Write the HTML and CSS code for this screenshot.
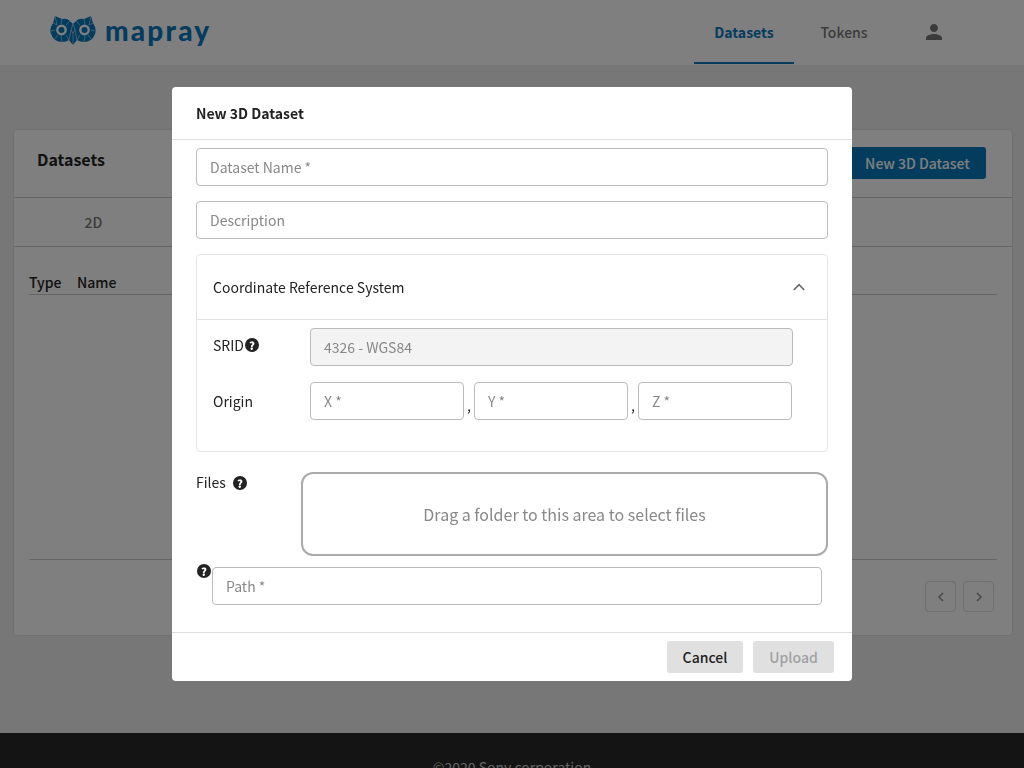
FILE: index.html
```html
<!DOCTYPE html>
<html lang="en">
<head>
    <meta charset="UTF-8">
    <meta name="viewport" content="width=device-width, initial-scale=1.0">
    <title>Mapray Datasets</title>
    <link rel="stylesheet" href="styles.css">
</head>
<body>
    <header class="topbar">
        <a class="logo">
            <svg class="logo-owl" viewBox="0 0 46 29" width="46" height="29">
                <path class="owl-fill" d="M5 0 L12 3 Q17 2 20 5 L23 8 L26 5 Q29 2 34 3 L41 0 L43 7 Q47 13 45 18 Q42 26 34 26 Q30 26 27 24 L23 29 L19 24 Q16 26 12 26 Q4 26 1 18 Q-1 13 3 7 Z"/>
                <path class="owl-lines" d="M5 0 L7 9 M12 3 L11 8 M20 5 L16 9 M1 15 L5 14 M3 7 L7 9 M21 14 L23 8 M23 8 L25 14 M5 23 L8 19 M19 24 L16 19 M11 20 L12 26 M41 0 L39 9 M34 3 L35 8 M26 5 L30 9 M45 15 L41 14 M43 7 L39 9 M41 23 L38 19 M27 24 L30 19 M35 20 L34 26 M21 14 L19 24 M25 14 L27 24 M23 29 L23 17 M21 14 L23 17 L25 14"/>
                <circle class="owl-ring" cx="11.5" cy="14" r="5.4"/>
                <circle class="owl-fill" cx="11.5" cy="14" r="3"/>
                <circle class="owl-ring" cx="34.5" cy="14" r="5.4"/>
                <circle class="owl-fill" cx="34.5" cy="14" r="3"/>
            </svg>
            <span class="logo-text">mapray</span>
        </a>
        <nav class="nav">
            <a class="nav-item active">Datasets</a>
            <a class="nav-item">Tokens</a>
            <a class="nav-user">
                <svg viewBox="0 0 24 24" width="24" height="24"><path d="M12 12c2.2 0 4-1.8 4-4s-1.8-4-4-4-4 1.8-4 4 1.8 4 4 4zm0 2c-2.7 0-8 1.3-8 4v2h16v-2c0-2.7-5.3-4-8-4z"/></svg>
            </a>
        </nav>
    </header>

    <main class="content">
        <section class="card">
            <div class="card-head">
                <h2>Datasets</h2>
                <button class="btn-primary" type="button">New 3D Dataset</button>
            </div>
            <div class="tabs">
                <div class="tab">2D</div>
                <div class="tab">3D</div>
            </div>
            <div class="table-wrap">
                <div class="table-head">
                    <span class="col-type">Type</span>
                    <span>Name</span>
                </div>
                <div class="table-rows"></div>
                <div class="pager">
                    <button class="pager-btn" type="button">
                        <svg viewBox="0 0 24 24" width="16" height="16"><path d="M15 6 L9 12 L15 18"/></svg>
                    </button>
                    <button class="pager-btn" type="button">
                        <svg viewBox="0 0 24 24" width="16" height="16"><path d="M9 6 L15 12 L9 18"/></svg>
                    </button>
                </div>
            </div>
        </section>
    </main>

    <footer class="footer">©2020 Sony corporation</footer>

    <div class="overlay">
        <div class="modal">
            <div class="modal-head">New 3D Dataset</div>
            <div class="modal-body">
                <input class="field" type="text" placeholder="Dataset Name *">
                <input class="field" type="text" placeholder="Description">

                <div class="panel">
                    <div class="panel-head">
                        <span>Coordinate Reference System</span>
                        <svg class="chevron" viewBox="0 0 24 24" width="18" height="18"><path d="M5 16 L12 9 L19 16"/></svg>
                    </div>
                    <div class="panel-body">
                        <div class="row row-srid">
                            <label class="row-label srid-label">SRID<span class="help help-tight">?</span></label>
                            <input class="field field-disabled" type="text" value="4326 - WGS84" disabled>
                        </div>
                        <div class="row">
                            <label class="row-label">Origin</label>
                            <div class="origin">
                                <input class="field" type="text" placeholder="X *">
                                <span class="comma">,</span>
                                <input class="field" type="text" placeholder="Y *">
                                <span class="comma">,</span>
                                <input class="field" type="text" placeholder="Z *">
                            </div>
                        </div>
                    </div>
                </div>

                <div class="files">
                    <label class="files-label">Files<span class="help">?</span></label>
                    <div class="dropzone">Drag a folder to this area to select files</div>
                </div>

                <div class="path">
                    <span class="help">?</span>
                    <input class="field" type="text" placeholder="Path *">
                </div>
            </div>
            <div class="modal-foot">
                <button class="btn" type="button">Cancel</button>
                <button class="btn btn-disabled" type="button">Upload</button>
            </div>
        </div>
    </div>
</body>
</html>
```

FILE: styles.css
```css
* {
    box-sizing: border-box;
}

html, body {
    height: 768px;
    margin: 0;
    overflow: hidden;
}

body {
    font-family: "Noto Sans CJK JP", "Noto Sans", sans-serif;
    font-size: 14px;
    color: #222;
    background-color: #eeeeee;
}

/* Top bar */
.topbar {
    display: flex;
    justify-content: space-between;
    height: 65px;
    padding-left: 50px;
    background-color: #ffffff;
}

.logo {
    display: flex;
    align-items: center;
    gap: 9px;
    height: 60px;
}

.logo-owl {
    display: block;
}

.owl-fill {
    fill: #0878bc;
}

.owl-lines {
    fill: none;
    stroke: #ffffff;
    stroke-width: 0.5;
}

.owl-ring {
    fill: #ffffff;
}

.logo-text {
    font-family: "Lato", sans-serif;
    font-size: 28px;
    font-weight: 900;
    letter-spacing: 2.2px;
    line-height: 30px;
    color: #0878bc;
}

.nav {
    display: flex;
    padding-right: 58px;
}

.nav-item {
    width: 100px;
    font-size: 14px;
    font-weight: 500;
    line-height: 64px;
    text-align: center;
    color: #777;
}

.nav-item.active {
    height: 64px;
    font-weight: 700;
    color: #0878bc;
    border-bottom: 2px solid #0878bc;
}

.nav-user {
    display: flex;
    align-items: center;
    justify-content: center;
    width: 64px;
    height: 64px;
    margin-left: 8px;
    fill: #777;
}

/* Main card */
.content {
    height: 668px;
    padding: 64px 11px 0 13px;
}

.card {
    height: 507px;
    background-color: #ffffff;
    border: 1px solid #e2e2e2;
    border-radius: 4px;
}

.card-head {
    display: flex;
    justify-content: space-between;
    align-items: center;
    height: 68px;
    padding: 0 26px 2px 23px;
    border-bottom: 1px solid #cccccc;
}

.card-head h2 {
    margin: 0 0 8px;
    font-size: 16px;
    font-weight: 700;
}

.btn-primary {
    width: 137px;
    height: 32px;
    border: 0;
    border-radius: 3px;
    font: 500 14px "Noto Sans CJK JP", sans-serif;
    color: #ffffff;
    background-color: #0878bc;
}

.tabs {
    display: flex;
    height: 49px;
    border-bottom: 1px solid #cccccc;
}

.tab {
    width: 159px;
    font-weight: 500;
    line-height: 48px;
    text-align: center;
    color: #777;
}

.table-wrap {
    padding: 0 15px;
}

.table-head {
    display: flex;
    height: 48px;
    padding-top: 24px;
    font-weight: 500;
    line-height: 22px;
    border-bottom: 1px solid #cccccc;
}

.col-type {
    width: 48px;
}

.table-rows {
    height: 265px;
    border-bottom: 1px solid #cccccc;
}

.pager {
    display: flex;
    justify-content: flex-end;
    gap: 7px;
    padding: 21px 3px 0 0;
}

.pager-btn {
    display: flex;
    align-items: center;
    justify-content: center;
    width: 31px;
    height: 31px;
    padding: 0;
    background: none;
    border: 1px solid #e0e0e0;
    border-radius: 4px;
}

.pager-btn path {
    fill: none;
    stroke: #999;
    stroke-width: 2.6;
}

.footer {
    height: 35px;
    padding-top: 24px;
    overflow: hidden;
    text-align: center;
    line-height: 20px;
    color: #cccccc;
    background-color: #282828;
}

/* Modal */
.overlay {
    position: fixed;
    top: 0;
    left: 0;
    right: 0;
    bottom: 0;
    display: flex;
    justify-content: center;
    align-items: flex-start;
    padding-top: 87px;
    background-color: rgba(0, 0, 0, 0.5);
}

.modal {
    width: 680px;
    height: 594px;
    background-color: #ffffff;
    border-radius: 4px;
}

.modal-head {
    height: 53px;
    padding: 16px 24px 0;
    font-weight: 700;
    line-height: 21px;
    border-bottom: 1px solid #dddddd;
}

.modal-body {
    height: 493px;
    padding: 8px 24px 0;
    border-bottom: 1px solid #dddddd;
}

.field {
    display: block;
    width: 100%;
    height: 38px;
    padding: 0 13px;
    margin-bottom: 15px;
    font: 400 14px "Noto Sans CJK JP", sans-serif;
    color: #222;
    background-color: #ffffff;
    border: 1px solid #bbbbbb;
    border-radius: 4px;
    outline: none;
}

.field::placeholder {
    color: #888;
    opacity: 1;
}

.field-disabled {
    width: 483px;
    margin-bottom: 0;
    color: #888;
    background-color: #f3f3f3;
}

.panel {
    height: 198px;
    border: 1px solid #e2e2e2;
    border-radius: 4px;
}

.panel-head {
    display: flex;
    justify-content: space-between;
    align-items: center;
    height: 65px;
    padding: 0 19px 0 16px;
    border-bottom: 1px solid #e2e2e2;
}

.chevron path {
    fill: none;
    stroke: #666;
    stroke-width: 2.2;
}

.panel-body {
    padding: 8px 0 0 16px;
}

.row {
    display: flex;
    align-items: center;
    height: 38px;
}

.row-srid {
    margin-bottom: 16px;
}

.row-label {
    display: flex;
    align-items: center;
    width: 97px;
}

.srid-label {
    margin-bottom: 5px;
}

.origin {
    display: flex;
    width: 482px;
}

.origin .field {
    width: 154px;
    margin-bottom: 0;
}

.comma {
    width: 10px;
    padding: 8px 0 0 3px;
    line-height: 30px;
}

.help {
    display: inline-block;
    flex: none;
    width: 14px;
    height: 14px;
    margin-left: 7px;
    font-size: 11px;
    font-weight: 900;
    line-height: 14px;
    text-align: center;
    color: #ffffff;
    background-color: #222;
    border-radius: 50%;
}

.help-tight {
    margin-left: 1px;
}

.files {
    display: flex;
    margin-top: 20px;
}

.files-label {
    display: flex;
    align-items: center;
    flex: none;
    width: 105px;
    height: 20px;
}

.files-label .help {
    margin-top: 2px;
}

.dropzone {
    display: flex;
    align-items: center;
    justify-content: center;
    width: 527px;
    height: 84px;
    font-size: 16px;
    color: #888;
    border: 2px solid #aaaaaa;
    border-radius: 12px;
}

.path {
    display: flex;
    margin-top: 11px;
    padding-left: 1px;
}

.path .help {
    margin: -3px 0 0;
}

.path .field {
    width: 610px;
    margin: 0 0 0 1px;
}

.modal-foot {
    display: flex;
    justify-content: flex-end;
    gap: 10px;
    padding: 8px 18px 0 0;
}

.btn {
    width: 76px;
    height: 32px;
    border: 0;
    border-radius: 3px;
    font: 500 14px "Noto Sans CJK JP", sans-serif;
    color: #222;
    background-color: #e0e0e0;
}

.btn-disabled {
    width: 81px;
    color: #a0a0a0;
}
```
